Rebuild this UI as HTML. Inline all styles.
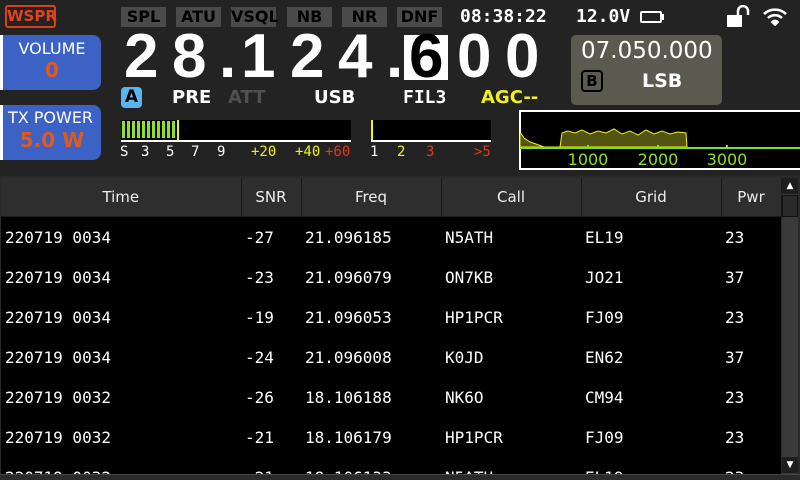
<!DOCTYPE html>
<html><head><meta charset="utf-8"><style>
*{margin:0;padding:0;box-sizing:border-box}
body{width:800px;height:480px;background:#232323;overflow:hidden;position:relative;font-family:"DejaVu Sans","Liberation Sans",sans-serif;color:#fff}
.a{position:absolute}
.btn{position:absolute;top:7px;height:20px;width:45px;background:#4b4b4b;color:#000;font-weight:bold;font-size:16px;text-align:center;line-height:20px}
.mono{font-family:"DejaVu Sans Mono","Liberation Mono",monospace}
.dig{position:absolute;top:26px;font-family:"Liberation Sans",sans-serif;font-size:62px;font-weight:bold;line-height:62px;color:#fff}
.lab{position:absolute;top:87px;font-size:18px;font-weight:bold;line-height:22px}
.sc{position:absolute;top:144px;font-size:14px;line-height:16px;font-family:"DejaVu Sans Mono",monospace}
table{border-collapse:collapse;position:absolute;left:1px;top:178px;width:780px;table-layout:fixed}
th{height:38px;background:#2e2e2e;border-right:1px solid #1a1a1a;border-bottom:1px solid #1a1a1a;font-weight:normal;font-size:15px;color:#eee}
td{height:40px;background:#000;font-family:"DejaVu Sans Mono",monospace;font-size:16px;padding-left:4px;color:#fff;padding-top:2px}
</style></head><body>
<div class="a" style="left:5px;top:5px;width:51px;height:23px;border:2px solid #d8401c;border-radius:3px;color:#e0441c;font-weight:bold;font-size:15px;line-height:19px;text-align:center">WSPR</div>
<div class="btn" style="left:121px">SPL</div>
<div class="btn" style="left:176px">ATU</div>
<div class="btn" style="left:231px">VSQL</div>
<div class="btn" style="left:287px">NB</div>
<div class="btn" style="left:342px">NR</div>
<div class="btn" style="left:397px">DNF</div>
<div class="a mono" style="left:460px;top:6px;font-size:18px;font-weight:bold;line-height:22px">08:38:22</div>
<div class="a mono" style="left:576px;top:6px;font-size:18px;font-weight:bold;line-height:22px">12.0V</div>
<div class="a" style="left:640px;top:11px;width:22px;height:12px;border:2px solid #fff;border-radius:2px"></div>
<div class="a" style="left:662px;top:14px;width:2px;height:6px;background:#fff"></div>
<svg class="a" style="left:725px;top:5px" width="28" height="22"><rect x="2" y="10" width="15" height="12" fill="#fff"/><path d="M13 10 V6 a5 5 0 0 1 10 0 V10" stroke="#fff" stroke-width="2.5" fill="none"/></svg>
<svg class="a" style="left:762px;top:6px" width="26" height="20"><path d="M2 8 a16 16 0 0 1 22 0" stroke="#fff" stroke-width="2.6" fill="none"/><path d="M6 12 a10 10 0 0 1 14 0" stroke="#fff" stroke-width="2.6" fill="none"/><path d="M10 16 a4 4 0 0 1 6 0 L13 19z" fill="#fff" stroke="#fff" stroke-width="2"/></svg>

<div class="a" style="left:0;top:35px;width:101px;height:55px;background:#3c62c6;border-radius:0 8px 8px 0;border-left:3px solid #fff;text-align:center">
<div style="font-size:16px;line-height:18px;margin-top:5px">VOLUME</div><div style="font-size:20px;font-weight:bold;color:#e05a1c;line-height:24px">0</div></div>
<div class="a" style="left:0;top:105px;width:101px;height:55px;background:#3c62c6;border-radius:0 8px 8px 0;border-left:3px solid #fff;text-align:center">
<div style="font-size:16px;line-height:18px;margin-top:4px;margin-left:-3px">TX POWER</div><div style="font-size:20px;font-weight:bold;color:#e05a1c;line-height:26px">5.0 W</div></div>

<div class="dig" style="left:124px">2</div>
<div class="dig" style="left:172px">8</div>
<div class="dig" style="left:219px">.</div>
<div class="dig" style="left:241px">1</div>
<div class="dig" style="left:290px">2</div>
<div class="dig" style="left:338px">4</div>
<div class="dig" style="left:386px">.</div>
<div class="a" style="left:404px;top:35px;width:44px;height:45px;background:#fff"></div>
<div class="dig" style="left:409px;color:#000">6</div>
<div class="dig" style="left:457px">0</div>
<div class="dig" style="left:505px">0</div>

<div class="a" style="left:121px;top:87px;width:21px;height:21px;background:#5ab4f0;border-radius:4px;color:#000;font-weight:bold;font-size:17px;line-height:21px;text-align:center">A</div>
<div class="lab" style="left:172px">PRE</div>
<div class="lab" style="left:228px;color:#505050">ATT</div>
<div class="lab" style="left:314px">USB</div>
<div class="lab mono" style="left:403px">FIL3</div>
<div class="lab" style="left:481px;color:#f0f020">AGC--</div>

<div class="a" style="left:571px;top:35px;width:151px;height:70px;background:#5b5a4e;border-radius:5px"></div>
<div class="a" style="left:581px;top:37px;font-size:23px;line-height:28px">07.050.000</div>
<div class="a" style="left:581px;top:70px;width:22px;height:22px;border:2px solid #000;border-radius:4px;color:#000;font-weight:bold;font-size:15px;line-height:18px;text-align:center">B</div>
<div class="a" style="left:642px;top:69px;font-size:19px;font-weight:bold;line-height:24px">LSB</div>

<div class="a" style="left:121px;top:120px;width:230px;height:20px;background:#000"></div>
<div class="a" style="left:122px;top:121px;width:54px;height:17px;background:repeating-linear-gradient(90deg,#8fe02a 0 3px,#000 3px 5px)"></div>
<div class="a" style="left:177px;top:120px;width:2px;height:20px;background:#f0f020"></div>
<div class="a" style="left:121px;top:140px;width:230px;height:2px;background:#fff"></div>
<div class="sc" style="left:120px">S</div><div class="sc" style="left:141px">3</div><div class="sc" style="left:166px">5</div><div class="sc" style="left:191px">7</div><div class="sc" style="left:217px">9</div>
<div class="sc" style="left:251px;color:#f0f020;width:26px;overflow:hidden">+20</div>
<div class="sc" style="left:295px;color:#f0f020;width:25px;overflow:hidden">+40</div>
<div class="sc" style="left:325px;color:#e03a1c;width:26px;overflow:hidden">+60</div>
<div class="a" style="left:371px;top:120px;width:120px;height:20px;background:#000"></div>
<div class="a" style="left:371px;top:120px;width:2px;height:20px;background:#f0f020"></div>
<div class="a" style="left:371px;top:140px;width:120px;height:2px;background:#fff"></div>
<div class="sc" style="left:370px">1</div><div class="sc" style="left:397px;color:#f0f020">2</div><div class="sc" style="left:426px;color:#e03a1c">3</div>
<div class="sc" style="left:474px;color:#e03a1c;width:17px;overflow:hidden">&gt;5</div>

<div class="a" style="left:519px;top:110px;width:281px;height:60px;background:#000;border:2px solid #fff;border-right:none"></div>
<svg class="a" style="left:520px;top:111px" width="280" height="58">
<path d="M0 21 L4 27 L10 31 L16 33 L24 36 L40 36 L42 22 L48 20 L55 22 L62 19 L70 23 L78 20 L86 22 L94 18 L102 23 L110 20 L118 24 L126 19 L134 23 L142 20 L150 23 L158 21 L166 22 L167 36 L0 36Z" fill="#545412" stroke="#f0f020" stroke-width="1"/>
<rect x="0" y="36" width="280" height="2" fill="#7ee020"/>
<rect x="67" y="34" width="2" height="3" fill="#7ee020"/><rect x="137" y="34" width="2" height="3" fill="#7ee020"/><rect x="206" y="34" width="2" height="3" fill="#7ee020"/>
<text x="68" y="54" fill="#8ee020" font-family="DejaVu Sans" font-size="16" text-anchor="middle">1000</text>
<text x="138" y="54" fill="#8ee020" font-family="DejaVu Sans" font-size="16" text-anchor="middle">2000</text>
<text x="207" y="54" fill="#8ee020" font-family="DejaVu Sans" font-size="16" text-anchor="middle">3000</text>
</svg>

<div class="a" style="left:0;top:176px;width:800px;height:304px;background:#2a2a2a"></div>
<div class="a" style="left:1px;top:216px;width:780px;height:258px;background:#000;overflow:hidden">
<table style="left:0;top:0">
<colgroup><col style="width:240px"><col style="width:60px"><col style="width:140px"><col style="width:140px"><col style="width:140px"><col style="width:60px"></colgroup>
<tr><td>220719 0034</td><td>-27</td><td>21.096185</td><td>N5ATH</td><td>EL19</td><td>23</td></tr>
<tr><td>220719 0034</td><td>-23</td><td>21.096079</td><td>ON7KB</td><td>JO21</td><td>37</td></tr>
<tr><td>220719 0034</td><td>-19</td><td>21.096053</td><td>HP1PCR</td><td>FJ09</td><td>23</td></tr>
<tr><td>220719 0034</td><td>-24</td><td>21.096008</td><td>K0JD</td><td>EN62</td><td>37</td></tr>
<tr><td>220719 0032</td><td>-26</td><td>18.106188</td><td>NK6O</td><td>CM94</td><td>23</td></tr>
<tr><td>220719 0032</td><td>-21</td><td>18.106179</td><td>HP1PCR</td><td>FJ09</td><td>23</td></tr>
<tr><td>220719 0032</td><td>-21</td><td>18.106133</td><td>N5ATH</td><td>EL19</td><td>23</td></tr>
</table></div>
<table style="top:178px">
<colgroup><col style="width:240px"><col style="width:60px"><col style="width:140px"><col style="width:140px"><col style="width:140px"><col style="width:60px"></colgroup>
<tr><th>Time</th><th>SNR</th><th>Freq</th><th>Call</th><th>Grid</th><th>Pwr</th></tr></table>
<div class="a" style="left:782px;top:178px;width:16px;height:296px;background:#3a3a3a"></div>
<div class="a" style="left:782px;top:178px;width:16px;height:16px;background:#1e1e1e;color:#fff;font-size:9px;text-align:center;line-height:16px">▲</div>
<div class="a" style="left:782px;top:195px;width:16px;height:22px;background:#2a2a2a;border:1px solid #111"></div>
<div class="a" style="left:782px;top:457px;width:16px;height:16px;background:#1e1e1e;color:#fff;font-size:9px;text-align:center;line-height:16px">▼</div>
<div class="a" style="left:0;top:474px;width:800px;height:6px;background:#2a2a2a;border-top:1px solid #444"></div>
</body></html>
